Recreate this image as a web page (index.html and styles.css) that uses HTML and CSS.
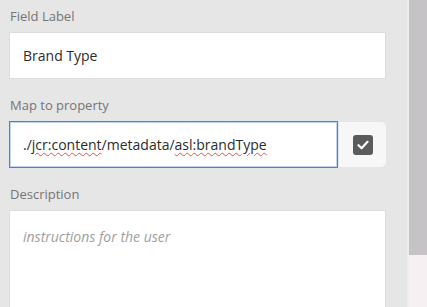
FILE: index.html
```html
<!DOCTYPE html>
<html lang="en">
<head>
    <meta charset="UTF-8">
    <title>Field Properties</title>
    <link rel="stylesheet" href="styles.css">
</head>
<body>
    <div class="panel">
        <!-- Field Label -->
        <div class="field">
            <label class="field-label" for="fieldLabel">Field Label</label>
            <input type="text" class="text-input" id="fieldLabel" value="Brand Type">
        </div>

        <!-- Map to property -->
        <div class="field">
            <label class="field-label">Map to property</label>
            <div class="input-row">
                <div class="text-input focused">./<span class="typo">jcr:content</span>/metadata/<span class="typo">asl:brandType</span></div>
                <button class="check-btn" aria-label="Confirm">
                    <span class="check-box">
                        <svg width="12" height="10" viewBox="0 0 12 10"><path d="M1.5 5.2 L4.6 8.2 L10.5 1.8" fill="none" stroke="#fff" stroke-width="2.2" stroke-linecap="round" stroke-linejoin="round"/></svg>
                    </span>
                </button>
            </div>
        </div>

        <!-- Description -->
        <div class="field last">
            <label class="field-label" for="description">Description</label>
            <textarea class="text-input text-area" id="description" placeholder="instructions for the user"></textarea>
        </div>
    </div>

    <div class="scrollbar">
        <div class="scroll-thumb"></div>
    </div>
</body>
</html>
```

FILE: styles.css
```css
* {
    box-sizing: border-box;
    margin: 0;
    padding: 0;
}

body {
    display: flex;
    height: 307px;
    overflow: hidden;
    background: #e6e6e6;
    font-family: 'Open Sans', 'Noto Sans', sans-serif;
}

/* Form panel */
.panel {
    flex: 1;
    padding: 7px 21px 0 9px;
}

.field {
    margin-bottom: 17px;
}

.field.last {
    margin-bottom: 0;
}

.field-label {
    display: block;
    height: 18px;
    line-height: 18px;
    margin-bottom: 7px;
    padding-left: 1px;
    font-size: 13px;
    color: #757575;
}

.text-input {
    display: flex;
    align-items: center;
    width: 100%;
    height: 47px;
    padding: 0 13px;
    background: #fff;
    border: 1px solid #dcdcdc;
    font-family: inherit;
    font-size: 14px;
    color: #2c2c2c;
    outline: none;
}

.input-row {
    display: flex;
    gap: 1px;
}

.input-row .text-input {
    flex: 1;
}

.focused {
    border-color: #4a80dc;
    box-shadow: inset 0 0 0 1px rgba(74, 128, 220, 0.35);
}

.typo {
    text-decoration: underline wavy #e0524f;
    text-decoration-thickness: 1px;
    text-underline-offset: 2px;
}

.check-btn {
    display: flex;
    align-items: center;
    justify-content: center;
    width: 47px;
    height: 45px;
    margin-top: 1px;
    background: #f8f7f8;
    border: none;
    border-radius: 0 5px 5px 0;
}

.check-box {
    display: flex;
    align-items: center;
    justify-content: center;
    width: 20px;
    height: 20px;
    background: #5b5b5b;
    border-radius: 3px;
}

.text-area {
    display: block;
    height: 97px;
    padding-top: 16px;
    border-bottom: none;
    resize: none;
}

.text-area::placeholder {
    font-style: italic;
    font-size: 14px;
    color: #a0a0a0;
}

/* Scrollbar */
.scrollbar {
    width: 20px;
    background: #f6f0f3;
    border-left: 2px solid #eeeeee;
}

.scroll-thumb {
    height: 255px;
    background: #c5c3c6;
}
```
